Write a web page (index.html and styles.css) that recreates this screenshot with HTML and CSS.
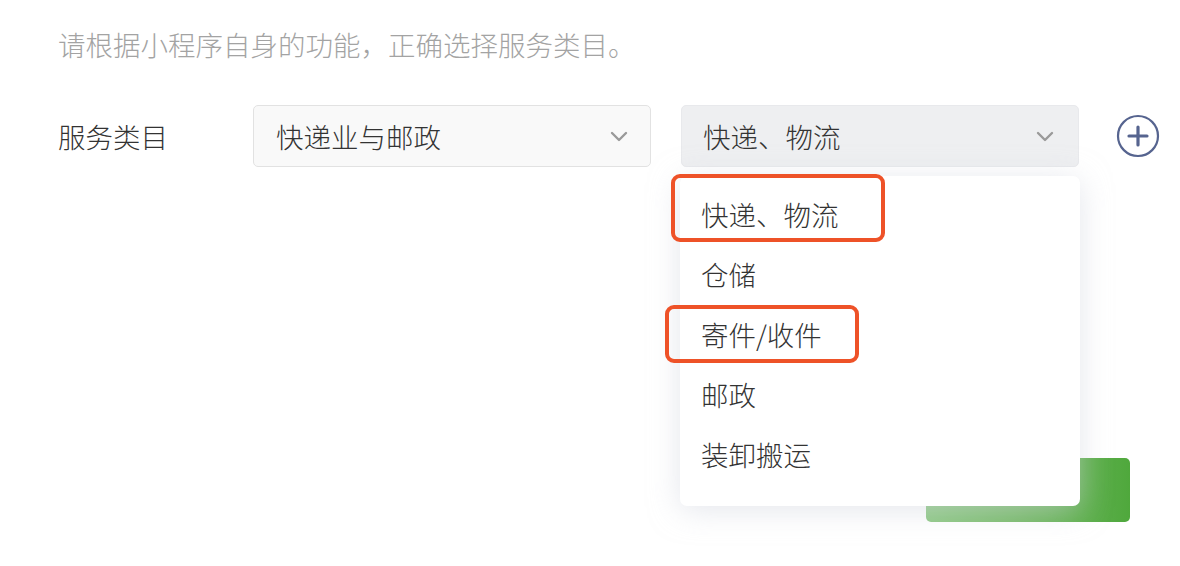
FILE: index.html
```html
<!DOCTYPE html>
<html lang="zh-CN">
<head>
<meta charset="utf-8">
<link rel="stylesheet" href="styles.css">
</head>
<body>
<div class="page">
  <p class="hint">请根据小程序自身的功能，正确选择服务类目。</p>
  <div class="form-row">
    <div class="label">服务类目</div>
    <div class="select select-first">
      <span>快递业与邮政</span>
      <svg class="chev" width="18" height="11" viewBox="0 0 18 11"><path d="M2 2 L9 9 L16 2" fill="none" stroke="#9a9a9a" stroke-width="2.4" stroke-linecap="round" stroke-linejoin="round"/></svg>
    </div>
    <div class="select-wrap">
      <div class="select select-open">
        <span>快递、物流</span>
        <svg class="chev" width="18" height="11" viewBox="0 0 18 11"><path d="M2 2 L9 9 L16 2" fill="none" stroke="#9a9a9a" stroke-width="2.4" stroke-linecap="round" stroke-linejoin="round"/></svg>
      </div>
      <ul class="dropdown">
        <li>快递、物流</li>
        <li>仓储</li>
        <li>寄件/收件</li>
        <li>邮政</li>
        <li>装卸搬运</li>
      </ul>
      <div class="mark mark-1"></div>
      <div class="mark mark-2"></div>
    </div>
    <button class="add" aria-label="添加">
      <svg width="44" height="44" viewBox="0 0 44 44"><circle cx="22" cy="22" r="20" fill="none" stroke="#56648f" stroke-width="2.2"/><path d="M22 13 V31 M13 22 H31" stroke="#56648f" stroke-width="3.2" stroke-linecap="round"/></svg>
    </button>
  </div>
  <div class="actions">
    <button class="primary"></button>
  </div>
</div>
</body>
</html>
```

FILE: styles.css
```css
html, body {
  margin: 0;
  padding: 0;
  background: #ffffff;
}
body {
  font-family: "Noto Sans CJK SC", "Noto Sans", sans-serif;
  font-weight: 300;
  color: #333333;
}
.page {
  width: 1180px;
  height: 566px;
  overflow: hidden;
  padding: 24px 0 0 58px;
  box-sizing: border-box;
}
.hint {
  margin: 0;
  font-size: 27.5px;
  line-height: 40px;
  color: #a3a3a3;
}
.form-row {
  margin-top: 41px;
  display: flex;
  align-items: center;
  height: 62px;
}
.label {
  flex: 0 0 195px;
  font-size: 27.5px;
  color: #333;
}
.select {
  flex: 0 0 auto;
  width: 398px;
  height: 62px;
  box-sizing: border-box;
  border-radius: 5px;
  display: flex;
  align-items: center;
  justify-content: space-between;
  padding: 0 22px 0 22px;
  font-size: 27.5px;
  color: #333;
}
.select-first {
  background: #f9f9f9;
  border: 1.5px solid #e2e2e2;
}
.select-wrap {
  flex: 0 0 auto;
  position: relative;
  margin-left: 30px;
}
.select-open {
  background: #eeeff1;
  border: 1.5px solid #e8e9ec;
  padding-left: 21px;
  padding-right: 24px;
}
.chev {
  display: block;
}
.dropdown {
  position: absolute;
  left: -1px;
  top: 71px;
  width: 400px;
  margin: 0;
  padding: 8px 0 22px 0;
  list-style: none;
  background: #ffffff;
  border-radius: 7px;
  box-shadow: 0 4px 30px rgba(205, 210, 220, 0.55);
  z-index: 2;
}
.dropdown li {
  height: 60px;
  line-height: 60px;
  padding-left: 21px;
  font-size: 27.5px;
  color: #333;
}
.mark {
  position: absolute;
  border: 4.5px solid #ee5228;
  border-radius: 9px;
  box-sizing: border-box;
  z-index: 3;
}
.mark-1 {
  left: -10px;
  top: 69px;
  width: 214px;
  height: 68px;
}
.mark-2 {
  left: -16px;
  top: 200px;
  width: 194px;
  height: 58px;
}
.add {
  flex: 0 0 44px;
  margin-left: 37px;
  width: 44px;
  height: 44px;
  padding: 0;
  border: none;
  background: none;
  display: block;
}
.add svg {
  display: block;
}
.actions {
  display: flex;
  justify-content: flex-end;
  margin-top: 291px;
  padding-right: 50px;
}
.primary {
  width: 204px;
  height: 64px;
  border: none;
  border-radius: 5px;
  background: linear-gradient(90deg, #8ec985 0%, #78bb6a 45%, #4fa83c 100%);
}
```
